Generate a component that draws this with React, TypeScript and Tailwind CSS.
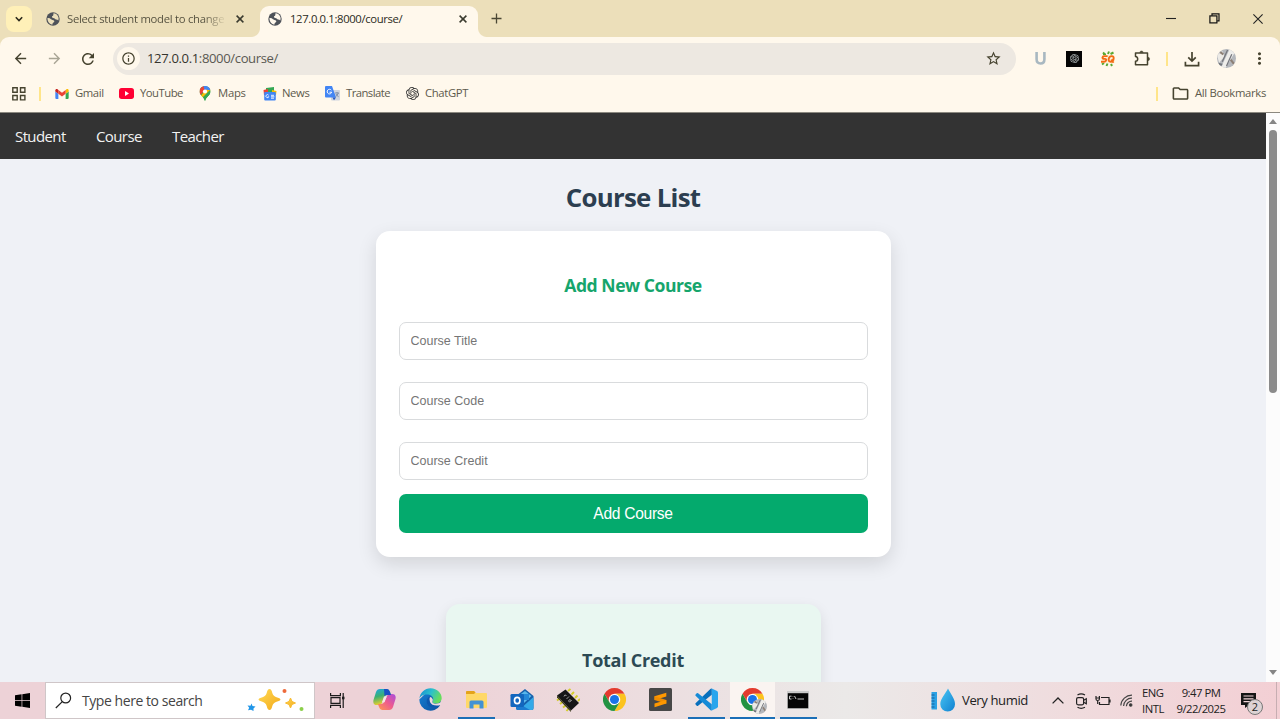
import React from "react";
import {
  MdArrowBack,
  MdArrowForward,
  MdRefresh,
  MdInfoOutline,
  MdStarBorder,
  MdMoreVert,
  MdOutlineFolder,
} from "react-icons/md";
import { SiOpenai } from "react-icons/si";

const CloseX = ({ className = "" }: { className?: string }) => (
  <svg className={`size-[8px] shrink-0 ${className}`} viewBox="0 0 8 8" stroke="#3a3a2e" strokeWidth="1.5">
    <path d="M0.6 0.6 7.4 7.4M7.4 0.6 0.6 7.4" />
  </svg>
);

const Globe = ({ land }: { land: string }) => (
  <svg className="ml-px size-[14px] shrink-0" viewBox="0 0 14 14">
    <circle cx="7" cy="7" r="6.7" fill="#4e5259" />
    <path d="M1.3 6.2Q3.500 5.800 5 7.300 6.500 8 8 8.600 9 9.500 7.500 10.500 6.500 11 6.300 12.700 2 12 1.300 6.200Z" fill={land} />
    <path d="M7.400 1.300Q11 1.500 12.400 5 12.900 7 12.300 8.400 11.500 7.300 9.800 7.400 8.700 6.400 7.300 6 5.500 5.600 6 4.200 7.600 4.200 7.400 1.300Z" fill={land} />
  </svg>
);

const Chrome = () => (
  <svg className="size-[23px]" viewBox="0 0 48 48">
    <circle cx="24" cy="24" r="12" fill="#fff" />
    <path fill="#e33b2e" d="M24,12H44.7812a23.9939,23.9939,0,0,0-41.5639.0029L13.6079,30l.0093-.0024A11.9852,11.9852,0,0,1,24,12Z" />
    <path fill="#fcc31e" d="M34.3913,30.0029,24.0007,48A23.994,23.994,0,0,0,44.78,12.0031H23.9989l-.0025.0093A11.985,11.985,0,0,1,34.3913,30.0029Z" />
    <path fill="#229342" d="M13.6086,30.0031,3.218,12.006A23.994,23.994,0,0,0,24.0025,48L34.3931,30.0029l-.0067-.0068a11.9852,11.9852,0,0,1-20.7778.007Z" />
    <circle cx="24" cy="24" r="9.5" fill="#1a73e8" />
  </svg>
);

const Avatar = ({ className = "" }: { className?: string }) => (
  <svg className={`shrink-0 ${className}`} viewBox="0 0 18 18">
    <defs>
      <clipPath id="avatarClip"><circle cx="9" cy="9" r="9" /></clipPath>
    </defs>
    <g clipPath="url(#avatarClip)">
      <rect width="18" height="18" fill="#b4b7bc" />
      <path d="M0 6 5 2 7 7 2 13Z" fill="#eceae6" />
      <path d="M12 0 17 3 8 18 4 17Z" fill="#eeedea" />
      <path d="M10 1 5 12M14 5 9 16" stroke="#74767c" strokeWidth="1.2" />
      <path d="M3 3 6 5M13 10 16 14" stroke="#8d8076" strokeWidth="2" />
      <path d="M1 14 5 15" stroke="#70747b" strokeWidth="2" />
    </g>
  </svg>
);

function TabStrip() {
  return (
    <div className="flex h-[37px] items-end bg-[#ecdfba]">
      <div className="mb-[5px] ml-[6px] flex size-[26px] items-center justify-center rounded-[8px] bg-[#fff0b8]">
        <svg className="size-[8px]" viewBox="0 0 8 8" fill="none" stroke="#2c2a1c" strokeWidth="1.6">
          <path d="M0.8 2.3 4 5.5 7.2 2.3" />
        </svg>
      </div>
      <div className="flex h-[31px] w-[228px] items-center pb-[5px] pl-[13px]">
        <Globe land="#ecdfba" />
        <div className="ml-[7px] h-[18px] w-[158px] bg-linear-to-r from-[#514d3c] from-86% to-[#e0d3ae] bg-clip-text text-[11.3px] leading-[18px] tracking-[-0.28px] whitespace-nowrap text-transparent">
          Select student model to change
        </div>
        <CloseX className="ml-[11px]" />
      </div>
      <div className="relative flex h-[31px] w-[218px] items-center rounded-t-[9px] bg-[#fff8ec] pb-[5px] pl-[7px]">
        <Globe land="#fff8ec" />
        <div className="ml-[8px] w-[169px] whitespace-nowrap text-[11.3px] tracking-[-0.36px] text-[#2b2a22]">127.0.0.1:8000/course/</div>
        <CloseX />
        <div className="absolute bottom-0 left-[-9px] size-[9px] bg-[radial-gradient(circle_at_0_0,#ecdfba_8.5px,#fff8ec_9.5px)]" />
        <div className="absolute right-[-9px] bottom-0 size-[9px] bg-[radial-gradient(circle_at_100%_0,#ecdfba_8.5px,#fff8ec_9.5px)]" />
      </div>
      <svg className="mb-[13px] ml-[13px] size-[11px]" viewBox="0 0 11 11" stroke="#4a4734" strokeWidth="1.3">
        <path d="M5.5 0.5V10.5M0.5 5.5H10.5" />
      </svg>
      <div className="mr-[17px] mb-[13px] ml-auto flex items-center gap-[33px]">
        <svg className="h-[11px] w-[10px]" viewBox="0 0 10 11" stroke="#222" strokeWidth="1.1"><path d="M0 5.5H10" /></svg>
        <svg className="size-[11px]" viewBox="0 0 11 11" fill="none" stroke="#111" strokeWidth="1.2">
          <rect x="0.9" y="2.9" width="7" height="7" />
          <path d="M3 2.8V0.9H10V7.9H8.2" />
        </svg>
        <svg className="size-[10px]" viewBox="0 0 10 10" stroke="#222" strokeWidth="1.1"><path d="M0.4 0.4 9.6 9.6M9.6 0.4 0.4 9.6" /></svg>
      </div>
    </div>
  );
}

function Toolbar() {
  return (
    <div className="bg-[#ecdfba]">
      <div className="flex h-[43px] items-center rounded-t-[9px] bg-[#fff8ec] text-[#46432f]">
        <MdArrowBack className="ml-[12px] size-[17px]" />
        <MdArrowForward className="ml-[17px] size-[17px] text-[#a9a595]" />
        <MdRefresh className="ml-[16px] size-[18px]" />
        <div className="ml-[16px] flex h-[32px] w-[903px] items-center rounded-full bg-[#ede8e1] pl-[4px]">
          <div className="flex size-[23px] items-center justify-center rounded-full bg-[#fff8ec]">
            <MdInfoOutline className="size-[15px]" />
          </div>
          <div className="ml-[7px] whitespace-nowrap pt-px text-[13.1px] tracking-[-0.38px] text-[#5a5852]">
            <span className="text-[#35342e]">127.0.0.1</span>:8000/course/
          </div>
          <MdStarBorder className="mr-[14px] ml-auto size-[17px]" />
        </div>
        <svg className="ml-[18px] size-[13px]" viewBox="0 0 13 13" fill="none" stroke="#a9b8c1" strokeWidth="2.6">
          <path d="M2.6 0V7.3Q2.6 11.5 6.5 11.5T10.4 7.3V0" />
        </svg>
        <div className="ml-[19px] flex size-[16px] items-center justify-center bg-[#050505]">
          <SiOpenai className="size-[9px] text-[#c9d1d1]" />
        </div>
        <svg className="ml-[18px] size-[16px]" viewBox="0 0 16 16" fill="none">
          <path d="M5 3.500 3 1.500M8 3 9 0.500M10.500 3 13.500 1.500M4 12 2 13.500M7.500 12.500 6.500 15M11 13 12 15M3 3.500 6 3.500" stroke="#5aa832" strokeWidth="2" />
          <rect x="1.500" y="4" width="13.500" height="8" rx="3" fill="#fdf0d5" />
          <path d="M7.600 5.100H4.300Q2.700 5.100 2.500 6.500T4.200 7.900H5Q6.400 7.900 6.100 9.300T4.300 10.700H1" stroke="#f36c15" strokeWidth="1.900" />
          <path d="M11.700 5.100Q14 5.100 13.600 7.600 13.200 10.700 10.600 10.700 8.300 10.700 8.700 7.900 9.200 5.100 11.700 5.100ZM11.300 8.500 13.500 11.700" stroke="#f36c15" strokeWidth="1.900" />
        </svg>
        <svg className="ml-[18px] size-[17px]" viewBox="0 0 17 17" fill="none" stroke="#46432f" strokeWidth="1.500" strokeLinejoin="round">
          <path d="M1.500 3H13.500V14.800H1.500V11.300Q3.700 11 3.700 8.900T1.500 6.500Z" />
          <path d="M5.800 2.600Q5.800 1 7.500 1T9.200 2.600ZM13.900 7.200Q15.600 7.200 15.600 8.900T13.900 10.600Z" fill="#46432f" strokeWidth="0.500" />
        </svg>
        <div className="ml-[15px] h-[14px] w-[2px] bg-[#ffe58a]" />
        <svg className="ml-[16px] size-[16px]" viewBox="0 0 17 17" fill="none" stroke="#46432f" strokeWidth="1.8">
          <path d="M8.5 1V10.5M4.5 6.7 8.5 10.7 12.5 6.7M1.5 11.5V15.5H15.5V11.5" />
        </svg>
        <Avatar className="ml-[17px] size-[19px]" />
        <MdMoreVert className="ml-[14px] size-[19px]" />
      </div>
    </div>
  );
}

function Bookmarks() {
  return (
    <div className="flex h-[33px] items-center border-b border-[#8b887f] bg-[#fff8ec] pb-[5px] text-[11.3px] whitespace-nowrap text-[#5d5a4d]">
      <svg className="ml-[12px] size-[14px]" viewBox="0 0 14 14" fill="none" stroke="#46432f" strokeWidth="1.400">
        <path d="M0.800 0.800H5.200V5.200H0.800ZM8.500 0.800H12.900V5.200H8.500ZM0.800 8.500H5.200V12.900H0.800ZM8.500 8.500H12.900V12.900H8.500Z" />
      </svg>
      <div className="ml-[13px] h-[14px] w-[2px] bg-[#ffe58a]" />
      <div className="ml-[14px] flex w-[64px] items-center">
        <svg className="h-[10px] w-[14px]" viewBox="52 42 88 66">
          <path fill="#4285f4" d="M58 108h14V74L52 59v43c0 3.32 2.69 6 6 6" />
          <path fill="#34a853" d="M120 108h14c3.32 0 6-2.69 6-6V59l-20 15" />
          <path fill="#fbbc04" d="M120 48v26l20-15v-8c0-7.42-8.47-11.65-14.4-7.2" />
          <path fill="#ea4335" d="M72 74V48l24 18 24-18v26L96 92" />
          <path fill="#c5221f" d="M52 51v8l20 15V48l-5.6-4.2c-5.94-4.45-14.4-.22-14.4 7.2" />
        </svg>
        <span className="ml-[6px] tracking-[-0.4px]">Gmail</span>
      </div>
      <div className="flex w-[80px] items-center">
        <svg className="h-[11px] w-[15px]" viewBox="0 0 15 11"><rect width="15" height="11" rx="2.7" fill="#ff0033" /><path d="M6 3 10 5.5 6 8Z" fill="#fff" /></svg>
        <span className="ml-[6px] tracking-[-0.5px]">YouTube</span>
      </div>
      <div className="flex w-[64px] items-center">
        <svg className="h-[15px] w-[12px]" viewBox="0 0 24 30">
          <defs><clipPath id="pinShape"><path d="M12 0A11 11 0 0 1 23 11C23 19 14.5 20.500 12 30 9.500 20.500 1 19 1 11A11 11 0 0 1 12 0Z" /></clipPath></defs>
          <g clipPath="url(#pinShape)">
            <rect width="24" height="30" fill="#34a853" />
            <path d="M0 0H11L14 6 3 18H0Z" fill="#ea4335" />
            <path d="M9 0H24V5L12 11Z" fill="#4285f4" />
            <path d="M3 20 17 4 24 1V9L8 25Z" fill="#fbbc04" />
            <path d="M9 0H24V8L16 8Z" fill="#4285f4" />
            <path d="M24 6V30H8V22Z" fill="#34a853" />
          </g>
          <circle cx="12" cy="11" r="4.200" fill="#fff" />
        </svg>
        <span className="ml-[7px] tracking-[-0.25px]">Maps</span>
      </div>
      <div className="flex w-[62px] items-center">
        <svg className="size-[14px]" viewBox="0 0 14 14">
          <path d="M3 1 11 0V7H3Z" fill="#34a853" />
          <path d="M0.500 3 5 2V8H1Z" fill="#ea4335" /><path d="M9 3 13.500 4 13 8H9Z" fill="#fbbc04" />
          <rect x="1.200" y="5" width="11.600" height="8.600" rx="1" fill="#4285f4" />
          <path d="M5.600 8.200A1.500 1.500 0 1 0 5.800 9.800H4.700M8 8.300H11M8 9.800H11.400M8 11.200H11" stroke="#fff" strokeWidth="0.900" fill="none" />
        </svg>
        <span className="ml-[5px] tracking-[-0.4px]">News</span>
      </div>
      <div className="flex w-[81px] items-center">
        <svg className="size-[15px]" viewBox="0 0 15 15">
          <rect x="6" y="4" width="9" height="10.500" rx="1" fill="#cfd4dd" />
          <path d="M1 0H7L11 11.500H1Q0 11.500 0 10.500V1Q0 0 1 0Z" fill="#4285f4" />
          <path d="M7.500 11.500H11L9 14.200Z" fill="#2459c2" />
          <path d="M6.300 4.200A2.300 2.300 0 1 0 6.700 6.200H4.500" fill="none" stroke="#fff" strokeWidth="1" />
          <path d="M10 7H14M12 6V7M13.300 7Q12.500 9.500 10.700 10.500M11 8Q12 10 13.600 10.700" fill="none" stroke="#70829e" strokeWidth="0.800" />
        </svg>
        <span className="ml-[6px] tracking-[-0.55px]">Translate</span>
      </div>
      <SiOpenai className="size-[13px] text-[#333]" />
      <span className="ml-[6px] tracking-[-0.35px]">ChatGPT</span>
      <div className="ml-auto h-[14px] w-[2px] bg-[#ffe58a]" />
      <MdOutlineFolder className="ml-[13px] size-[19px] text-[#46432f]" />
      <span className="mr-[13px] ml-[5px] w-[72px] tracking-[-0.33px]">All Bookmarks</span>
    </div>
  );
}

const inputClass =
  "block h-[38px] rounded-[7px] border border-[#d9dbdd] px-[11px] placeholder:text-[#757575]";

function Page() {
  return (
    <div className="flex h-[569px] overflow-hidden">
      <div className="w-[1266px] bg-[#eff1f6]">
        <nav className="flex h-[46px] items-center bg-[#333] pt-px text-[15px] tracking-[-0.6px] text-[#f2f2f2]">
          <a className="ml-[15px] w-[81px]">Student</a>
          <a className="w-[76px]">Course</a>
          <a>Teacher</a>
        </nav>
        <h1 className="mt-[20px] h-[36px] text-center text-[25.8px] leading-[36px] font-bold tracking-[-0.7px] text-[#2c3e50]">Course List</h1>
        <form className="mx-auto mt-[16px] h-[326px] w-[515px] rounded-[14px] bg-white px-[23px] pt-[42px] shadow-[0_7px_19px_rgba(0,0,0,0.12)]">
          <h2 className="h-[24px] text-center text-[17.6px] leading-[24px] font-bold tracking-[-0.48px] text-[#16a56c]">Add New Course</h2>
          <div className="mt-[25px] flex flex-col gap-[22px] font-['Liberation_Sans',sans-serif] text-[12.5px]">
            <input className={inputClass} placeholder="Course Title" />
            <input className={inputClass} placeholder="Course Code" />
            <input className={inputClass} placeholder="Course Credit" />
          </div>
          <button type="button" className="mt-[14px] block h-[39px] w-full rounded-[7px] bg-[#04aa6d] font-['Liberation_Sans',sans-serif] text-[15.6px] tracking-[-0.3px] text-white">Add Course</button>
        </form>
        <section className="mx-auto mt-[47px] h-[200px] w-[375px] rounded-[14px] bg-[#e9f7f1] pt-[44px] shadow-[0_5px_14px_rgba(0,0,0,0.1)]">
          <h2 className="text-center text-[18px] leading-[24px] font-bold tracking-[-0.3px] text-[#2c4a54]">Total Credit</h2>
        </section>
      </div>
      <div className="flex w-[14px] flex-col items-center bg-[#fcfcfc]">
        <svg className="mt-[6px] h-[5px] w-[8px]" viewBox="0 0 8 5"><path d="M4 0 8 5H0Z" fill="#858585" /></svg>
        <div className="mt-[6px] h-[263px] w-[8px] rounded-full bg-[#8b8b8b]" />
        <svg className="mt-auto mb-[7px] h-[5px] w-[8px]" viewBox="0 0 8 5"><path d="M4 5 8 0H0Z" fill="#858585" /></svg>
      </div>
    </div>
  );
}

const TaskbarApp = ({ children, active = false, open = false }: { children: React.ReactNode; active?: boolean; open?: boolean }) => (
  <div className={`flex h-[37px] w-[46px] flex-col items-center ${active ? "bg-[#faf4f1] bg-clip-content px-[0.5px]" : ""}`}>
    <div className="flex h-[35px] items-center justify-center">{children}</div>
    {open && <div className={`h-[2px] ${active ? "w-full" : "w-[37px]"} bg-[#1b6fb7]`} />}
  </div>
);

function Taskbar() {
  return (
    <div className="flex h-[37px] items-center bg-linear-to-r from-[#edd2d7] from-35% via-[#ebe9e8] via-66% to-[#f3cfd4] text-[#222]">
      <svg className="ml-[15px] size-[15px]" viewBox="0 0 15 15"><path d="M0 2.200 6.600 1.300V7.200H0ZM7.300 1.200 15 0.100V7.200H7.300ZM0 7.900H6.600V13.700L0 12.800ZM7.300 7.900H15V14.900L7.300 13.800Z" /></svg>
      <div className="ml-[15px] flex h-[37px] w-[270px] items-center border border-[#cfc6c8] bg-white pl-[9px]">
        <svg className="size-[17px]" viewBox="0 0 17 17" fill="none" stroke="#222" strokeWidth="1.200"><circle cx="10.700" cy="6" r="4.900" /><path d="M7.300 9.600 0.800 16" /></svg>
        <span className="ml-[10px] w-[165px] text-[14px] tracking-[-0.44px] whitespace-nowrap text-[#444]">Type here to search</span>
        <svg className="h-[25px] w-[58px]" viewBox="0 0 58 25">
          <defs><linearGradient id="spark" x1="0" y1="0" x2="1" y2="1"><stop stopColor="#ffda55" /><stop offset="1" stopColor="#f3a91a" /></linearGradient></defs>
          <path d="M22.500 1Q24.500 1 25.300 5 26.300 8.700 31 9.800 33.500 10.500 33.500 11.500T31 13.200Q26.300 14.300 25.300 18 24.500 22 22.500 22T19.700 18Q18.700 14.300 14 13.200 11.500 12.500 11.500 11.500T14 9.800Q18.700 8.700 19.700 5 20.500 1 22.500 1Z" fill="url(#spark)" />
          <path d="M43.500 10 45 13.500 48.500 15 45 16.500 43.500 20 42 16.500 38.500 15 42 13.500Z" fill="url(#spark)" stroke="#f8bb30" />
          <path d="M4.500 15.500 5.500 18 8.500 18.500 6.500 20.500 6.500 23 4 21.700 1 22.300 2.200 19.700 0.500 17.500 3.500 17.800Z" fill="#2196e8" />
          <circle cx="37.500" cy="3" r="2" fill="#ee6a3a" /><circle cx="54.500" cy="21" r="2" fill="#8bcf4a" />
        </svg>
      </div>
      <svg className="ml-[15px] size-[15px]" viewBox="0 0 15 15" fill="none" stroke="#1c1c1c" strokeWidth="1.200">
        <path d="M0.600 0V2.600H10.400V0M0.600 15V12.400H10.400V15M1 4.700H10V10.300H1ZM13.200 0V15" /><path d="M12 5H14.500" strokeWidth="2.600" />
      </svg>
      <div className="ml-[16px] flex">
        <TaskbarApp>
          <svg className="size-[23px]" viewBox="0 0 23 23">
            <defs>
              <linearGradient id="cpA" x1="0" y1="0" x2="0.300" y2="1"><stop stopColor="#1ba6e8" /><stop offset="0.500" stopColor="#3bb070" /><stop offset="1" stopColor="#f0cf2c" /></linearGradient>
              <linearGradient id="cpB" x1="1" y1="0" x2="0" y2="1"><stop stopColor="#a84ddd" /><stop offset="0.500" stopColor="#ee5b8e" /><stop offset="1" stopColor="#ff9a4d" /></linearGradient>
            </defs>
            <path d="M7 1H14Q16 1 17 4L18 7H14Q12 7 11.300 9L9 15Q8 17 6 17H4Q-0.500 17 0.500 12L3 4Q4 1 7 1Z" fill="url(#cpA)" />
            <path d="M16 22H9Q7 22 6 19L5 16H8Q10.500 16 11.500 13L14 8Q15 6 17 6H19Q23.500 6 22.500 11L20 19Q19 22 16 22Z" fill="url(#cpB)" />
            <path d="M11 1H14Q16 1 17 4L18 7H14Q12 7 11.500 8.500Z" fill="#1851c5" />
            <path d="M11 8.500H13.800L11.500 14.300H9Z" fill="#f6e6ea" />
          </svg>
        </TaskbarApp>
        <TaskbarApp>
          <svg className="size-[23px]" viewBox="0 0 23 23">
            <defs>
              <linearGradient id="edA" x1="0" y1="0" x2="1" y2="0.400"><stop stopColor="#168bd2" /><stop offset="0.550" stopColor="#2cc0cc" /><stop offset="1" stopColor="#67dd5c" /></linearGradient>
              <linearGradient id="edB" x1="0" y1="0" x2="1" y2="1"><stop stopColor="#1683d8" /><stop offset="1" stopColor="#0c4f9e" /></linearGradient>
            </defs>
            <path d="M0.300 11.500A11.200 11.200 0 0 0 21 17.500L22 10 11 1Z" fill="url(#edB)" />
            <path d="M0.300 11C1 4.500 5.800 0.300 11.500 0.300 18.500 0.300 22.700 5.500 22.700 10 22.700 13.500 20 15.600 17 15.600 14.500 15.600 13 14.800 13.200 14 13.500 13 14.200 12.800 14.200 11 14.200 8.500 11.500 6.500 8 6.500 4 6.500 1 8.500 0.300 11Z" fill="url(#edA)" />
            <path d="M7.700 13.500Q7.700 9.800 11 8.500C13.300 9 14.200 11 13.800 12.500 13.600 13.400 13 13.600 13.200 14.400 13.700 16 17.500 17 21.500 14.900 20 19 16 19.800 13.300 19.500 9.800 19 7.700 16.500 7.700 13.500Z" fill="#0d58ad" />
            <path d="M11 9Q9.800 11 11 14C12.500 17.500 16.500 18.300 22 17L22.500 14Q18 16.500 15 15.500 12.600 14.600 13.700 13 14.500 11 12.500 9.500Z" fill="#edd8dc" />
          </svg>
        </TaskbarApp>
        <TaskbarApp open>
          <svg className="h-[18px] w-[21px]" viewBox="0 0 21 18">
            <path d="M0 1Q0 0 1 0H8L10 2H20Q21 2 21 3V16Q21 17 20 17H1Q0 17 0 16Z" fill="#ffd868" />
            <path d="M0 1Q0 0 1 0H8L9.500 1.500 8 3H0Z" fill="#e4a31b" />
            <path d="M3.500 17.500V11Q3.500 9.500 5 9.500H16Q17.500 9.500 17.500 11V17.500H13.500V13.500H7.500V17.500Z" fill="#4292d4" />
          </svg>
        </TaskbarApp>
        <TaskbarApp>
          <svg className="size-[24px]" viewBox="0 0 24 24">
            <path d="M6 8 15 1 23.500 8V20Q23.500 22 22 22H8Q6 22 6 20Z" fill="#1560ac" />
            <path d="M8 8 15 3 21.500 8 14 15Z" fill="#58b7ec" /><path d="M12 6H19V12H12Z" fill="#2488d8" />
            <path d="M23.500 9V20Q23.500 22 22 22H9L23.500 9Z" fill="#34a9e8" />
            <path d="M6 14 20 22H8Q6 22 6 20Z" fill="#1b7bd0" />
            <rect x="0.500" y="6" width="13.500" height="13" rx="1.300" fill="#1266be" />
            <ellipse cx="7.200" cy="12.500" rx="2.700" ry="3.200" fill="none" stroke="#fff" strokeWidth="1.700" />
          </svg>
        </TaskbarApp>
        <TaskbarApp>
          <svg className="size-[24px]" viewBox="0 0 24 24">
            <path d="M4 10 1 12.500M7 13.500 4 16M10 17 7 19.500M13 20 10.500 23M12 3 14.500 1M15.500 6.500 18 4M19 10 21.500 7.500M22 13 24 11" stroke="#d4cc2a" strokeWidth="1.900" />
            <path d="M1 7.500 9.500 1.500 23 15 15 22.500Z" fill="#161616" />
            <path d="M1 7.500 15 22.500V24L1 9.500Z" fill="#3b3a1c" />
            <path d="M8 8.500Q8.500 6 10.500 7.500M10.500 11 13 8.500M12.500 13Q13 10.500 15.500 12.500L13.500 14Z" stroke="#aaa" strokeWidth="0.900" fill="none" />
          </svg>
        </TaskbarApp>
        <TaskbarApp><Chrome /></TaskbarApp>
        <TaskbarApp>
          <svg className="size-[23px]" viewBox="0 0 23 23">
            <rect width="23" height="23" rx="1.500" fill="#474747" />
            <path d="M5.500 8.300 17.300 4.800V8.400L5.500 12Z" fill="#ff9800" />
            <path d="M5.500 8.300 17.300 12V15.700L5.500 12Z" fill="#f08c00" />
            <path d="M5.500 15.500 17.300 12V15.500L5.500 19.200Z" fill="#ff9800" />
          </svg>
        </TaskbarApp>
        <TaskbarApp open>
          <svg className="size-[23px]" viewBox="0 0 24 24">
            <path d="M17.500 0.500 23 3.200Q24 3.700 24 5V19Q24 20.300 23 20.800L17.500 23.500Z" fill="#29a5ed" />
            <path d="M17.500 0.500V7L3.200 18.500Q2.500 19 1.800 18.500L0.600 17.300Q0 16.600 0.600 16L16 1Q16.700 0.200 17.500 0.500Z" fill="#0870bd" />
            <path d="M17.500 23.500V17L3.200 5.500Q2.500 5 1.800 5.500L0.600 6.700Q0 7.400 0.600 8L16 23Q16.700 23.800 17.500 23.500Z" fill="#168bd7" />
          </svg>
        </TaskbarApp>
        <TaskbarApp open active>
          <div className="relative">
            <Chrome />
            <Avatar className="absolute right-[-3px] bottom-[-3px] size-[15px]" />
          </div>
        </TaskbarApp>
        <TaskbarApp open>
          <svg className="h-[18px] w-[22px]" viewBox="0 0 22 18">
            <rect width="22" height="18" fill="#c9c9c9" /><rect x="0.800" y="2.200" width="20.400" height="15" fill="#050505" />
            <path d="M4.500 5.200H2.500V8H4.500M6 5.500V6M6 7.200V7.700M7.500 5 9 8M10.500 8H17" fill="none" stroke="#ddd" strokeWidth="0.900" />
          </svg>
        </TaskbarApp>
      </div>
      <svg className="ml-[110px] h-[25px] w-[25px] shrink-0" viewBox="0 0 25 25">
        <defs><linearGradient id="drop" x1="0" y1="0" x2="1" y2="1"><stop stopColor="#49c6f4" /><stop offset="1" stopColor="#1181d0" /></linearGradient></defs>
        <rect x="0.500" y="4" width="5.500" height="17.500" fill="#2ba1e4" />
        <path d="M0.500 7H3.500M0.500 10H3.500M0.500 13H3.500M0.500 16H3.500M0.500 19H3.500" stroke="#155e9c" strokeWidth="1" />
        <path d="M17 0.500C19 5 24 10.500 24 16.200A7.300 7.300 0 0 1 9.300 16.200C9.300 10.500 15 5 17 0.500Z" fill="url(#drop)" />
      </svg>
      <span className="ml-[6px] w-[90px] text-[13.1px] tracking-[-0.4px] whitespace-nowrap">Very humid</span>
      <svg className="h-[7px] w-[12px]" viewBox="0 0 12 7" fill="none" stroke="#222" strokeWidth="1.300"><path d="M0.600 6.400 6 1 11.400 6.400" /></svg>
      <svg className="ml-[12px] h-[16px] w-[11px]" viewBox="0 0 11 16" fill="none" stroke="#222" strokeWidth="1.200">
        <rect x="0.600" y="4.600" width="7" height="7.200" rx="1.500" /><path d="M7.600 7.200 10.300 5.800V10.700L7.600 9.300M1.500 2Q5 -0.200 9 2M1.500 14.300Q5 16.400 9 14.300" />
      </svg>
      <svg className="ml-[8px] h-[11px] w-[16px]" viewBox="0 0 16 11" fill="none" stroke="#222" strokeWidth="1.200">
        <path d="M6 2.500H14V9.500H4.500V7M15 4.500V7.500M1 1V4Q1 5.500 2.700 5.500T4.400 4V1M0.500 3H5M2.700 5.500V9" />
      </svg>
      <svg className="ml-[9px] size-[13px]" viewBox="0 0 13 13" fill="none" stroke="#444" strokeWidth="1.200">
        <path d="M0.800 11.500A11 11 0 0 1 12 1.200M3.600 12A8 8 0 0 1 12 4.200M6.400 12.200A5.300 5.300 0 0 1 12 7.200" /><circle cx="10.700" cy="11" r="1.200" fill="#222" />
      </svg>
      <div className="ml-[9px] w-[30px] text-[11.300px] leading-[16px] tracking-[-0.5px] whitespace-nowrap"><div>ENG</div><div>INTL</div></div>
      <div className="ml-[4px] w-[50px] text-center text-[11.300px] leading-[16px] tracking-[-0.500px] whitespace-nowrap"><div>9:47 PM</div><div>9/22/2025</div></div>
      <div className="relative ml-[15px]">
        <svg className="h-[17px] w-[17px]" viewBox="0 0 17 17"><path d="M0 1H15V13H8L4 16V13H0Z" fill="#151515" /><path d="M2.500 4H12.500M2.500 6.800H12.500M2.500 9.600H9" stroke="#f3d5d9" strokeWidth="1.200" /></svg>
        <div className="absolute top-[7px] left-[6px] flex size-[16px] items-center justify-center rounded-full border border-[#777] bg-[#ddd3d4] text-[11px]">2</div>
      </div>
      <div className="ml-auto mr-[3px] h-full w-px bg-[#c7aeb2]" />
    </div>
  );
}

export default function App() {
  return (
    <div className="h-[719px] w-[1280px] overflow-hidden font-['Open_Sans','Noto_Sans',sans-serif]">
      <TabStrip />
      <Toolbar />
      <Bookmarks />
      <Page />
      <Taskbar />
    </div>
  );
}
